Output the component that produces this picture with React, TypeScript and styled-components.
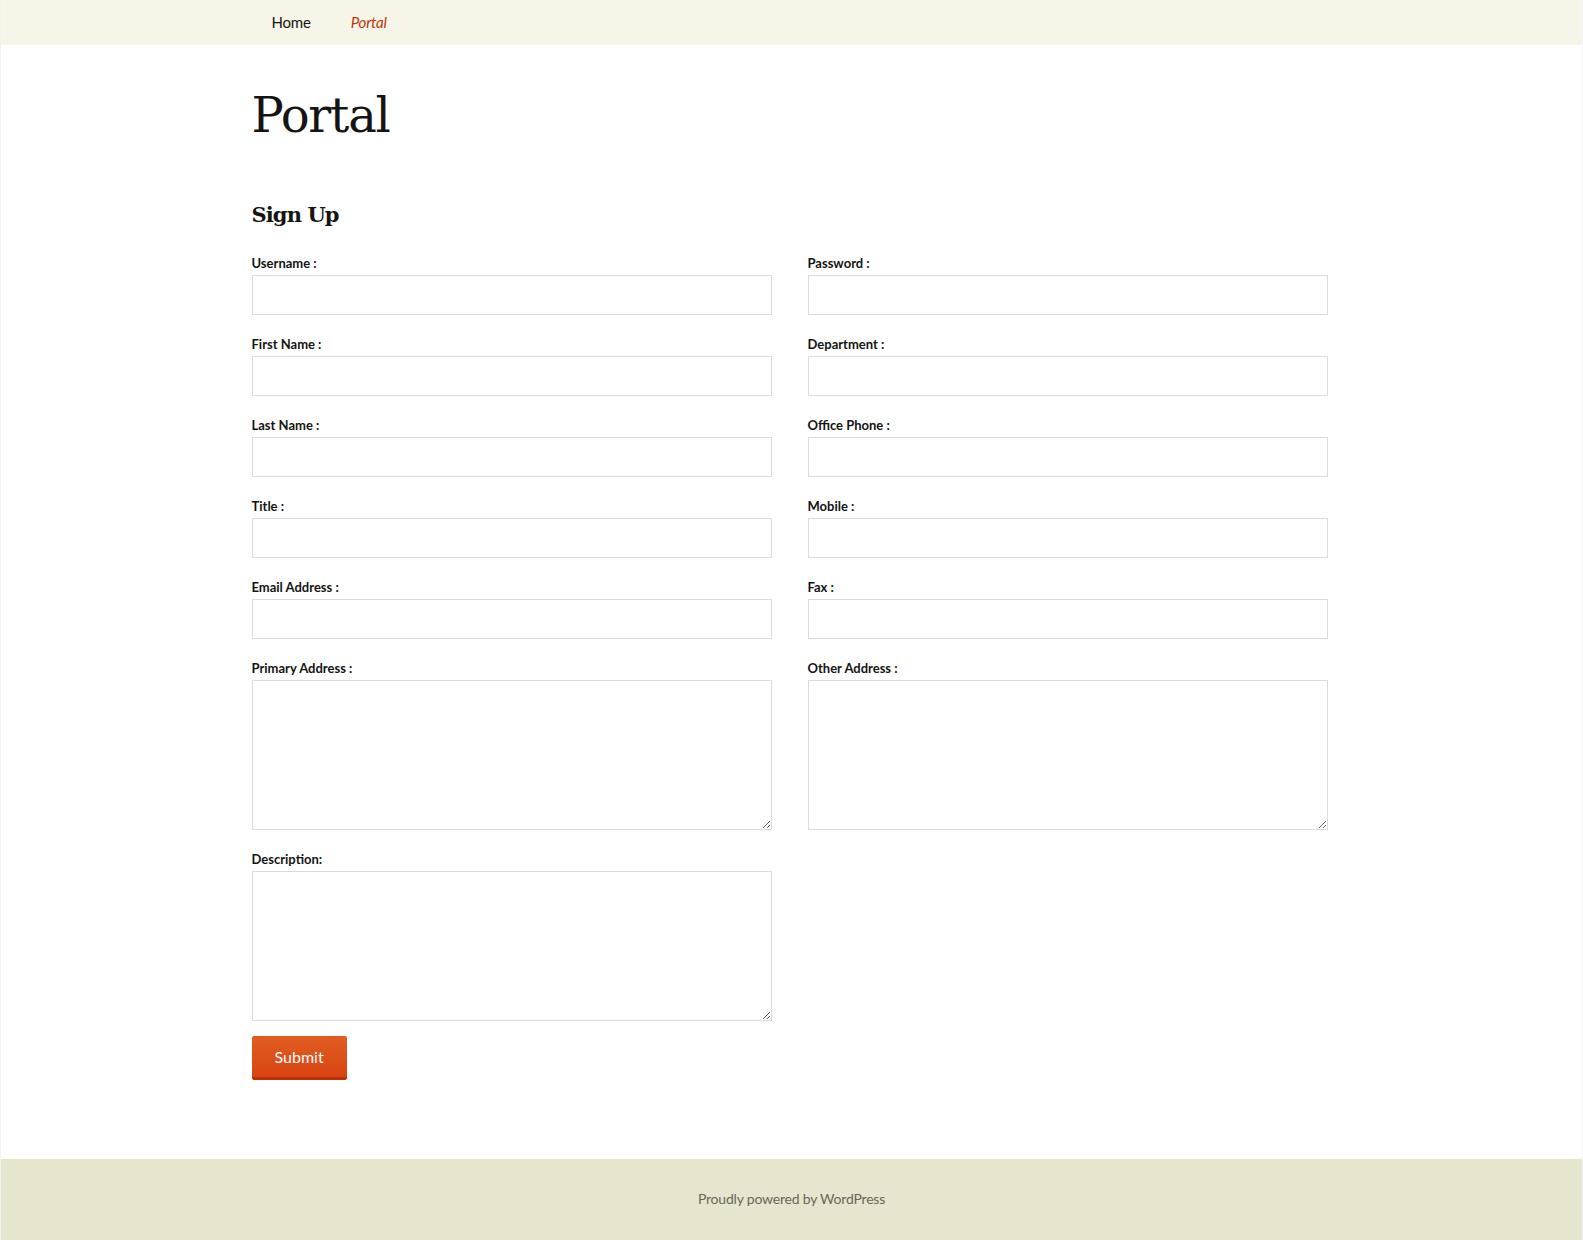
import React from "react";
import styled, { createGlobalStyle } from "styled-components";

const Global = createGlobalStyle`
  html, body { margin: 0; padding: 0; background: #fff; }
  body { font-family: Lato, "Open Sans", sans-serif; color: #141412; }
  * { box-sizing: border-box; }
`;

const Site = styled.div`
  border-left: 1px solid #f2f2f2;
  border-right: 1px solid #f2f2f2;
  max-width: 1600px;
  margin: 0 auto;
  background: #fff;
`;

const NavBar = styled.nav`
  background: #f7f5e7;
  height: 45px;
`;

const Inner = styled.div`
  width: 1080px;
  margin: 0 auto;
`;

const Menu = styled.ul`
  list-style: none;
  margin: 0;
  padding: 0;
  display: flex;
`;

const MenuLink = styled.a<{ $current?: boolean }>`
  display: block;
  padding: 0 20px;
  line-height: 45px;
  font-size: 15px;
  text-decoration: none;
  letter-spacing: -0.2px;
  color: ${(p) => (p.$current ? "#bc360a" : "#141412")};
  font-style: ${(p) => (p.$current ? "italic" : "normal")};
`;

const Main = styled.main`
  padding-top: 42px;
  padding-bottom: 79px;
`;

const Title = styled.h1`
  font-family: "DejaVu Serif", serif;
  font-weight: 400;
  font-size: 48px;
  line-height: 56px;
  margin: 0 0 58px;
  letter-spacing: -1.2px;
`;

const SubTitle = styled.h2`
  font-family: "DejaVu Serif", serif;
  font-weight: 700;
  font-size: 21px;
  line-height: 28px;
  margin: 0 0 26px;
  letter-spacing: -0.9px;
`;

const Grid = styled.div`
  display: grid;
  grid-template-columns: 520px 520px;
  column-gap: 36px;
`;

const Field = styled.div`
  display: flex;
  flex-direction: column;
  margin-bottom: 21px;
`;

const LastField = styled(Field)`
  margin-bottom: 15px;
`;

const Label = styled.label`
  font-size: 13px;
  font-weight: 700;
  line-height: 16px;
  margin-bottom: 4px;
`;

const Input = styled.input`
  height: 40px;
  width: 100%;
  border: 1px solid #dcdcdc;
  background: #fff;
  padding: 4px 8px;
  font: inherit;
  margin: 0;
`;

const TextArea = styled.textarea`
  height: 150px;
  width: 100%;
  border: 1px solid #dcdcdc;
  background: #fff;
  padding: 4px 8px;
  font: inherit;
  margin: 0;
  resize: both;
`;

const SubmitButton = styled.button`
  background: linear-gradient(to bottom, #e05d22 0%, #d94412 100%);
  border: none;
  border-bottom: 3px solid #b93207;
  border-radius: 2px;
  color: #fff;
  font-family: Lato, "Open Sans", sans-serif;
  font-size: 16px;
  line-height: 20px;
  padding: 11px 23px 10px;
  cursor: pointer;
`;

const Footer = styled.footer`
  background: #e8e5ce;
  height: 81px;
  padding-bottom: 2px;
  display: flex;
  align-items: center;
  justify-content: center;
  font-size: 14px;
`;

const FooterLink = styled.a`
  color: #686758;
  text-decoration: none;
  letter-spacing: -0.2px;
`;

const fields: [string, string][] = [
  ["Username :", "Password :"],
  ["First Name :", "Department :"],
  ["Last Name :", "Office Phone :"],
  ["Title :", "Mobile :"],
  ["Email Address :", "Fax :"],
];

export default function App() {
  return (
    <>
      <Global />
      <Site>
        <NavBar>
          <Inner>
            <Menu>
              <li>
                <MenuLink href="#">Home</MenuLink>
              </li>
              <li>
                <MenuLink href="#" $current>
                  Portal
                </MenuLink>
              </li>
            </Menu>
          </Inner>
        </NavBar>
        <Main>
          <Inner>
            <Title>Portal</Title>
            <SubTitle>Sign Up</SubTitle>
            <form onSubmit={(e) => e.preventDefault()}>
              <Grid>
                {fields.map(([a, b]) => (
                  <React.Fragment key={a}>
                    <Field>
                      <Label>{a}</Label>
                      <Input type="text" />
                    </Field>
                    <Field>
                      <Label>{b}</Label>
                      <Input type={b.startsWith("Password") ? "password" : "text"} />
                    </Field>
                  </React.Fragment>
                ))}
                <Field>
                  <Label>Primary Address :</Label>
                  <TextArea />
                </Field>
                <Field>
                  <Label>Other Address :</Label>
                  <TextArea />
                </Field>
                <LastField>
                  <Label>Description:</Label>
                  <TextArea />
                </LastField>
              </Grid>
              <SubmitButton type="submit">Submit</SubmitButton>
            </form>
          </Inner>
        </Main>
        <Footer>
          <FooterLink href="#">Proudly powered by WordPress</FooterLink>
        </Footer>
      </Site>
    </>
  );
}
